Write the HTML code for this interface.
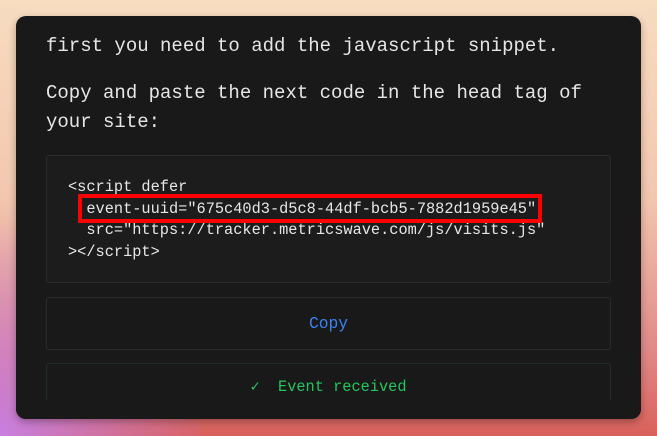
<!DOCTYPE html>
<html><head><style>
html,body{margin:0;padding:0;width:657px;height:436px;overflow:hidden;}
body{background:linear-gradient(180deg,#f7dcc0 0%,#f2c7b0 45%,#e08a88 80%,#d9605a 100%);position:relative;font-family:"Liberation Mono",monospace;}
.bgl{position:absolute;left:0;top:200px;width:200px;height:236px;background:radial-gradient(circle at 0% 100%,#c77fe0 0%,rgba(200,130,220,0) 70%);}
.card{position:absolute;left:16px;top:16px;width:625px;height:403px;background:#191919;border-radius:10px;box-shadow:0 3px 8px rgba(0,0,0,.3);overflow:hidden;}
.p{position:absolute;left:30px;color:#e6e6e6;font-size:19px;line-height:29px;white-space:pre;}
.code{position:absolute;left:30px;top:139px;width:565px;height:128px;box-sizing:border-box;background:#1c1c1c;border:1px solid #2a2a2a;border-radius:3px;}
.code pre{margin:0;position:absolute;left:21px;top:21px;font-family:"Liberation Mono",monospace;font-size:15.3px;line-height:21.5px;color:#e6e6e6;}
.red{position:absolute;left:62px;top:178px;width:456px;height:21px;border:4px solid #f00;}
.btn{position:absolute;left:30px;top:281px;width:565px;height:53px;box-sizing:border-box;border:1px solid #2a2a2a;border-radius:3px;color:#3b82f6;font-size:16.3px;text-align:center;line-height:51px;}
.ev{position:absolute;left:30px;top:347px;width:565px;height:60px;border:1px solid #1f2e26;border-radius:3px;color:#22c55e;font-size:15.3px;text-align:center;padding-top:13px;box-sizing:border-box;}
.cut{position:absolute;left:0;top:384px;width:625px;height:20px;background:#191919;}
</style></head><body>
<div class="bgl"></div>
<div class="card">
<div class="p" style="top:16px">first you need to add the javascript snippet.</div>
<div class="p" style="top:63px">Copy and paste the next code in the head tag of
your site:</div>
<div class="code"><pre>&lt;script defer
  event-uuid="675c40d3-d5c8-44df-bcb5-7882d1959e45"
  src="https://tracker.metricswave.com/js/visits.js"
&gt;&lt;/script&gt;</pre></div>
<div class="red"></div>
<div class="btn">Copy</div>
<div class="ev">✓&nbsp;&nbsp;Event received</div>
<div class="cut"></div>
</div>
</body></html>
